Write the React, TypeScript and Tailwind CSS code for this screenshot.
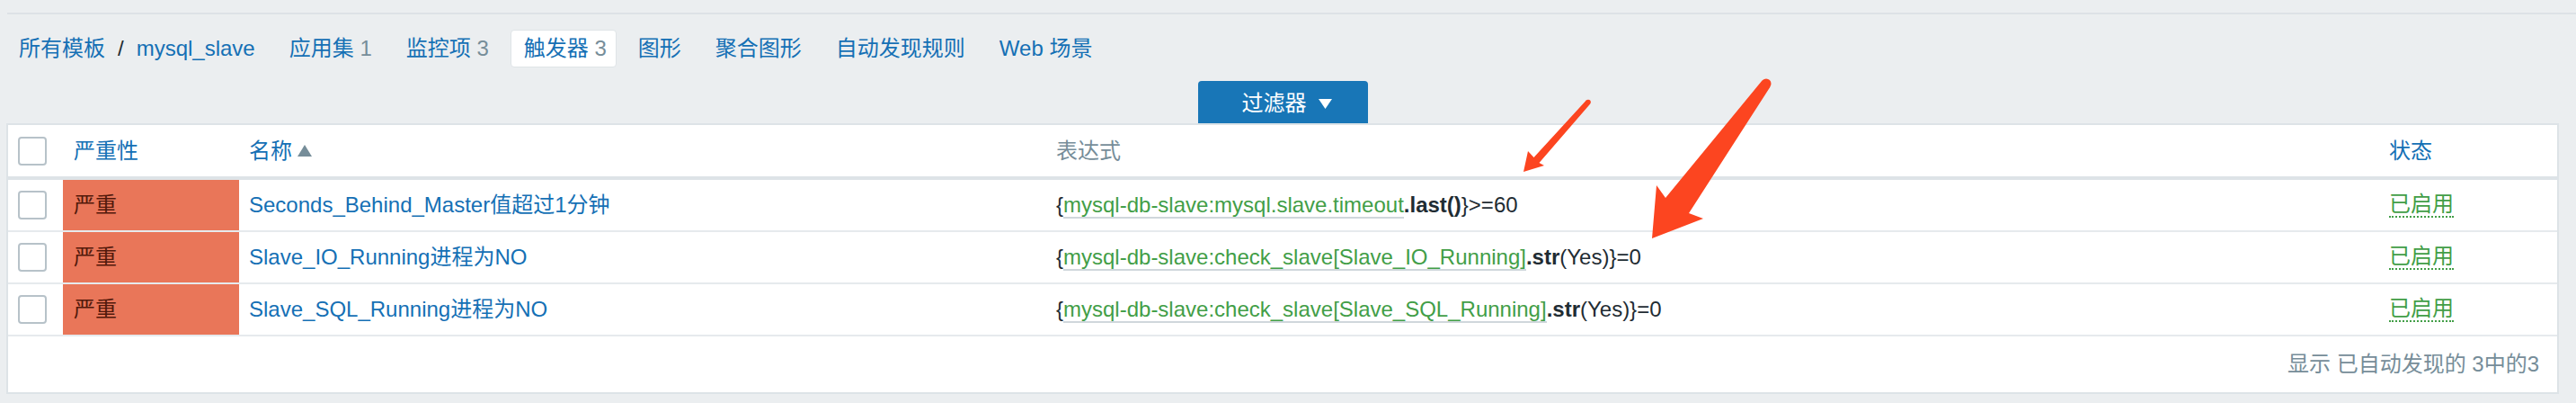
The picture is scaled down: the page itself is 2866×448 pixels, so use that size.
import React from "react";

interface TriggerRowProps {
    name: string;
    item: string;
    fn: string;
    tail: string;
}

const rows: TriggerRowProps[] = [
    { name: "Seconds_Behind_Master值超过1分钟", item: "mysql-db-slave:mysql.slave.timeout", fn: ".last()", tail: "}>=60" },
    { name: "Slave_IO_Running进程为NO", item: "mysql-db-slave:check_slave[Slave_IO_Running]", fn: ".str", tail: "(Yes)}=0" },
    { name: "Slave_SQL_Running进程为NO", item: "mysql-db-slave:check_slave[Slave_SQL_Running]", fn: ".str", tail: "(Yes)}=0" },
];

function Checkbox() {
    return <div className="w-[32px] h-[32px] rounded-[4px] border-2 border-[#b7c2c9] bg-white" />;
}

function NavItem({ label, count, active }: { label: string; count?: number; active?: boolean }) {
    return (
        <div className={active
            ? "h-[42px] flex items-center pl-[14px] pr-[10px] bg-white rounded-[4px] border border-[#dfe4e7]"
            : "h-[42px] flex items-center px-[14px]"}>
            <span className="text-[#1570b5]">{label}</span>
            {count !== undefined && <span className="text-[#768d99]">&nbsp;{count}</span>}
        </div>
    );
}

function TriggerRow(props: TriggerRowProps) {
    return (
        <div className="grid grid-cols-[61px_196px_897px_1483px_1fr] h-[58px] border-b-2 border-[#e6eaed]">
            <div className="flex items-center pl-[11px]">
                <Checkbox />
            </div>
            <div className="flex items-center pl-[12px] bg-[#e97659] text-[#52190b]">严重</div>
            <div className="flex items-center pl-[11px] text-[#1570b5] whitespace-nowrap">{props.name}</div>
            <div className="flex items-center pl-[12px] text-[#1f2c33] whitespace-nowrap">
                <span>
                    {"{"}
                    <span className="text-[#429e47] border-b-2 border-[#d0d7dc]">{props.item}</span>
                    <span className="font-bold">{props.fn}</span>
                    {props.tail}
                </span>
            </div>
            <div className="flex items-center pl-[12px]">
                <span className="text-[#429e47] leading-[26px] border-b-2 border-dotted border-[#429e47]">已启用</span>
            </div>
        </div>
    );
}

function Arrows() {
    return (
        <svg className="absolute left-0 top-0 pointer-events-none" width="2866" height="448" viewBox="0 0 2866 448">
            <g fill="#fc4520">
                <circle cx="1767" cy="113.5" r="2.8" />
                <polygon points="1764.8,111.5 1769.2,115.5 1712.5,181 1718,184 1695,191 1700,168 1706.5,175" />
                <circle cx="1965" cy="93" r="5.5" />
                <polygon points="1960.5,89.5 1969.5,96.5 1879,237 1895,243 1838,265 1843,206 1853,220" />
            </g>
        </svg>
    );
}

export default function App() {
    return (
        <div className="relative w-[2866px] h-[448px] overflow-hidden bg-[#ebeef0] text-[24px] font-['Liberation_Sans','Noto_Sans_CJK_SC',sans-serif]">

            <div className="h-[14px]" />
            <div className="ml-[8px] border-t-2 border-[#dde2e6]" />

            {/* breadcrumbs + tabs */}
            <div className="mt-[17px] ml-[7px] flex flex-row gap-[10px] whitespace-nowrap">
                <div className="h-[42px] flex items-center px-[14px]">
                    <span className="text-[#1570b5]">所有模板</span>
                    <span className="text-[#1f2c33] px-[14px]">/</span>
                    <span className="text-[#1570b5]">mysql_slave</span>
                </div>
                <NavItem label="应用集" count={1} />
                <NavItem label="监控项" count={3} />
                <NavItem label="触发器" count={3} active />
                <NavItem label="图形" />
                <NavItem label="聚合图形" />
                <NavItem label="自动发现规则" />
                <NavItem label="Web 场景" />
            </div>

            {/* filter tab */}
            <div className="mt-[15px] ml-[7px] mr-[19px] flex justify-center">
                <div className="h-[47px] w-[189px] flex items-center pl-[49px] bg-[#1876b7] rounded-t-[4px] text-white">
                    <span className="pt-[2px]">过滤器</span>
                    <svg className="ml-[13px] mt-[4px]" width="15" height="11" viewBox="0 0 15 11">
                        <polygon points="0,0 15,0 7.5,11" fill="#ffffff" />
                    </svg>
                </div>
            </div>

            {/* triggers table */}
            <div className="ml-[7px] mr-[19px] h-[301px] border-2 border-[#dde3e7] bg-white">
                <div className="grid grid-cols-[61px_196px_897px_1483px_1fr] h-[61px] border-b-4 border-[#dde3e7]">
                    <div className="flex items-center pl-[11px]">
                        <Checkbox />
                    </div>
                    <div className="flex items-center pl-[12px] text-[#1570b5]">严重性</div>
                    <div className="flex items-center pl-[11px] text-[#1570b5]">
                        名称
                        <svg className="ml-[6px]" width="16" height="13" viewBox="0 0 16 13">
                            <polygon points="8,0 16,13 0,13" fill="#768d99" />
                        </svg>
                    </div>
                    <div className="flex items-center pl-[12px] text-[#768d99]">表达式</div>
                    <div className="flex items-center pl-[12px] text-[#1570b5]">状态</div>
                </div>

                {rows.map((r) => (
                    <TriggerRow key={r.name} {...r} />
                ))}

                <div className="h-[62px] flex items-center justify-end pr-[20px] text-[#768d99]">
                    显示 已自动发现的 3中的3
                </div>
            </div>

            <Arrows />
        </div>
    );
}
